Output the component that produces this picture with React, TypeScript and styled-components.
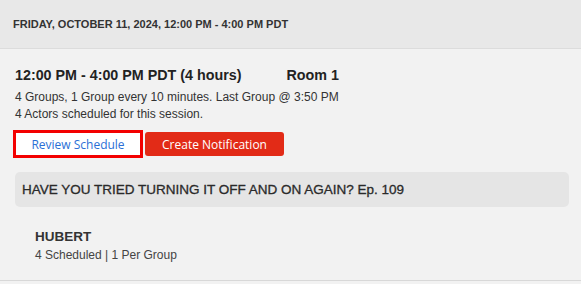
import styled, { createGlobalStyle } from 'styled-components';

const GlobalStyle = createGlobalStyle`
  html, body {
    margin: 0;
    padding: 0;
    background: #f2f2f2;
  }
  body {
    font-family: 'Liberation Sans', Arial, sans-serif;
    color: #333;
  }
`;

const Page = styled.div`
  width: 581px;
  height: 284px;
  background: #f2f2f2;
  display: flex;
  flex-direction: column;
  overflow: hidden;
`;

const DateHeader = styled.div`
  height: 48px;
  background: #e8e8e8;
  border-bottom: 1px solid #dcdcdc;
  display: flex;
  align-items: center;
  padding-left: 13px;
  font-size: 11px;
  font-weight: bold;
  color: #333;
  flex: none;
`;

const Session = styled.div`
  display: flex;
  flex-direction: column;
  padding: 18px 12px 0 15px;
  border-bottom: 1px solid #d8d8d8;
  height: 232px;
  box-sizing: border-box;
  flex: none;
`;

const TitleRow = styled.div`
  display: flex;
  gap: 45px;
  font-size: 14.3px;
  font-weight: bold;
  color: #222;
  line-height: 16px;
`;

const Info = styled.div`
  margin-top: 6px;
  font-size: 12px;
  line-height: 17px;
  color: #333;
`;

const Actions = styled.div`
  display: flex;
  align-items: center;
  gap: 2px;
  margin-top: 7px;
  margin-left: -2px;
`;

interface ButtonProps {
  $primary?: boolean;
}

const Button = styled.button<ButtonProps>`
  font-family: 'Open Sans', 'Noto Sans', sans-serif;
  font-size: 12px;
  box-sizing: border-box;
  cursor: pointer;
  padding: 0;
  display: flex;
  align-items: center;
  justify-content: center;
  background: ${p => (p.$primary ? '#e22b17' : '#fff')};
  color: ${p => (p.$primary ? '#fff' : '#2b6fd6')};
  border: ${p => (p.$primary ? 'none' : '3px solid #f30000')};
  border-radius: ${p => (p.$primary ? '3px' : '0')};
  width: ${p => (p.$primary ? '139px' : '130px')};
  height: ${p => (p.$primary ? '24px' : '28px')};
`;

const Episode = styled.div`
  margin-top: 14px;
  height: 35px;
  flex: none;
  background: #e5e5e5;
  border-radius: 5px;
  display: flex;
  align-items: center;
  padding-left: 7px;
  font-size: 13.5px;
  color: #2a2a2a;
  -webkit-text-stroke: 0.3px #2a2a2a;
`;

const Actor = styled.div`
  padding: 22px 0 0 20px;
  display: flex;
  flex-direction: column;
  gap: 4px;
`;

const ActorName = styled.div`
  font-size: 13.5px;
  font-weight: bold;
  color: #333;
`;

const ActorMeta = styled.div`
  font-size: 12px;
  color: #444;
`;

export default function App() {
  return (
    <Page>
      <GlobalStyle />
      <DateHeader>FRIDAY, OCTOBER 11, 2024, 12:00 PM - 4:00 PM PDT</DateHeader>
      <Session>
        <TitleRow>
          <span>12:00 PM - 4:00 PM PDT (4 hours)</span>
          <span>Room 1</span>
        </TitleRow>
        <Info>
          4 Groups, 1 Group every 10 minutes. Last Group @ 3:50 PM
          <br />
          4 Actors scheduled for this session.
        </Info>
        <Actions>
          <Button>Review Schedule</Button>
          <Button $primary>Create Notification</Button>
        </Actions>
        <Episode>HAVE YOU TRIED TURNING IT OFF AND ON AGAIN? Ep. 109</Episode>
        <Actor>
          <ActorName>HUBERT</ActorName>
          <ActorMeta>4 Scheduled | 1 Per Group</ActorMeta>
        </Actor>
      </Session>
    </Page>
  );
}
